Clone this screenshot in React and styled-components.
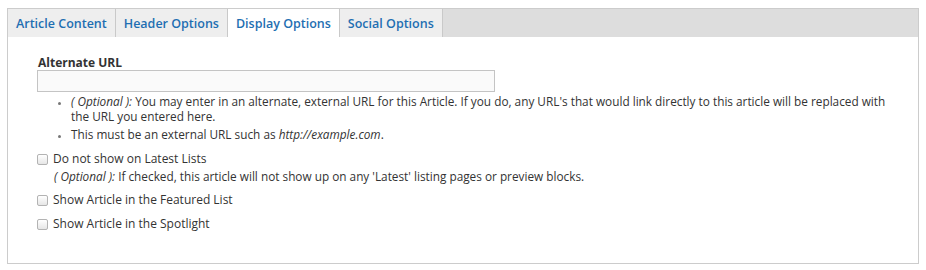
import React from "react";
import styled, { createGlobalStyle } from "styled-components";

const GlobalStyle = createGlobalStyle`
  body {
    margin: 0;
    background: #fff;
    font-family: "Open Sans", "DejaVu Sans", sans-serif;
    color: #333;
  }
`;

const Panel = styled.div`
  margin: 8px 0 0 7px;
  width: 912px;
  height: 256px;
  border: 1px solid #cccccc;
  box-sizing: border-box;
`;

const TabBar = styled.div`
  display: flex;
  height: 28px;
  background: #dddddd;
`;

const Tab = styled.div`
  display: flex;
  align-items: center;
  padding: 0 8px;
  border-right: 1px solid #c9c9c9;
  background: ${(p) => (p.$active ? "#ffffff" : "#eeeeee")};
  color: #1f6fb2;
  font-size: 12.5px;
  font-weight: 600;
`;

const Content = styled.div`
  padding: 18px 30px 0 29px;
`;

const FieldLabel = styled.div`
  font-size: 12px;
  font-weight: 700;
  line-height: 16px;
  padding-left: 1px;
  margin-bottom: -1px;
  color: #333;
`;

const TextInput = styled.input`
  display: block;
  width: 458px;
  height: 22px;
  box-sizing: border-box;
  margin: 0;
  border: 1px solid #c4c4c4;
  background: #fafafa;
`;

const HelpList = styled.ul`
  margin: 2px 0 0;
  padding: 0 0 0 34px;
  font-size: 11.8px;
  line-height: 15px;
  color: #333;
`;

const HelpItem = styled.li`
  margin-bottom: 3px;
  &::marker {
    color: #777;
    font-size: 9px;
  }
`;

const CheckRow = styled.label`
  display: flex;
  align-items: center;
  gap: 5px;
  margin-top: ${(p) => p.$top}px;
  font-size: 12px;
  line-height: 16px;
  color: #333;
`;

const Box = styled.input`
  appearance: none;
  margin: 0;
  width: 11px;
  height: 11px;
  border: 1px solid #b3b3b3;
  border-radius: 2px;
  background: linear-gradient(#ffffff, #e6e6e6);
  box-sizing: border-box;
`;

const Description = styled.div`
  margin: 2px 0 0 17px;
  font-size: 11.8px;
  line-height: 15px;
  color: #333;
`;

const App = () => {
  return (
    <>
      <GlobalStyle />
      <Panel>
        <TabBar>
          <Tab>Article Content</Tab>
          <Tab>Header Options</Tab>
          <Tab $active>Display Options</Tab>
          <Tab>Social Options</Tab>
        </TabBar>
        <Content>
          <FieldLabel>Alternate URL</FieldLabel>
          <TextInput type="text" />
          <HelpList>
            <HelpItem>
              <em>( Optional ):</em> You may enter in an alternate, external URL
              for this Article. If you do, any URL's that would link directly to
              this article will be replaced with the URL you entered here.
            </HelpItem>
            <HelpItem>
              This must be an external URL such as <em>http://example.com</em>.
            </HelpItem>
          </HelpList>
          <CheckRow $top={9}>
            <Box type="checkbox" />
            Do not show on Latest Lists
          </CheckRow>
          <Description>
            <em>( Optional ):</em> If checked, this article will not show up on
            any 'Latest' listing pages or preview blocks.
          </Description>
          <CheckRow $top={8}>
            <Box type="checkbox" />
            Show Article in the Featured List
          </CheckRow>
          <CheckRow $top={8}>
            <Box type="checkbox" />
            Show Article in the Spotlight
          </CheckRow>
        </Content>
      </Panel>
    </>
  );
};

export default App;
